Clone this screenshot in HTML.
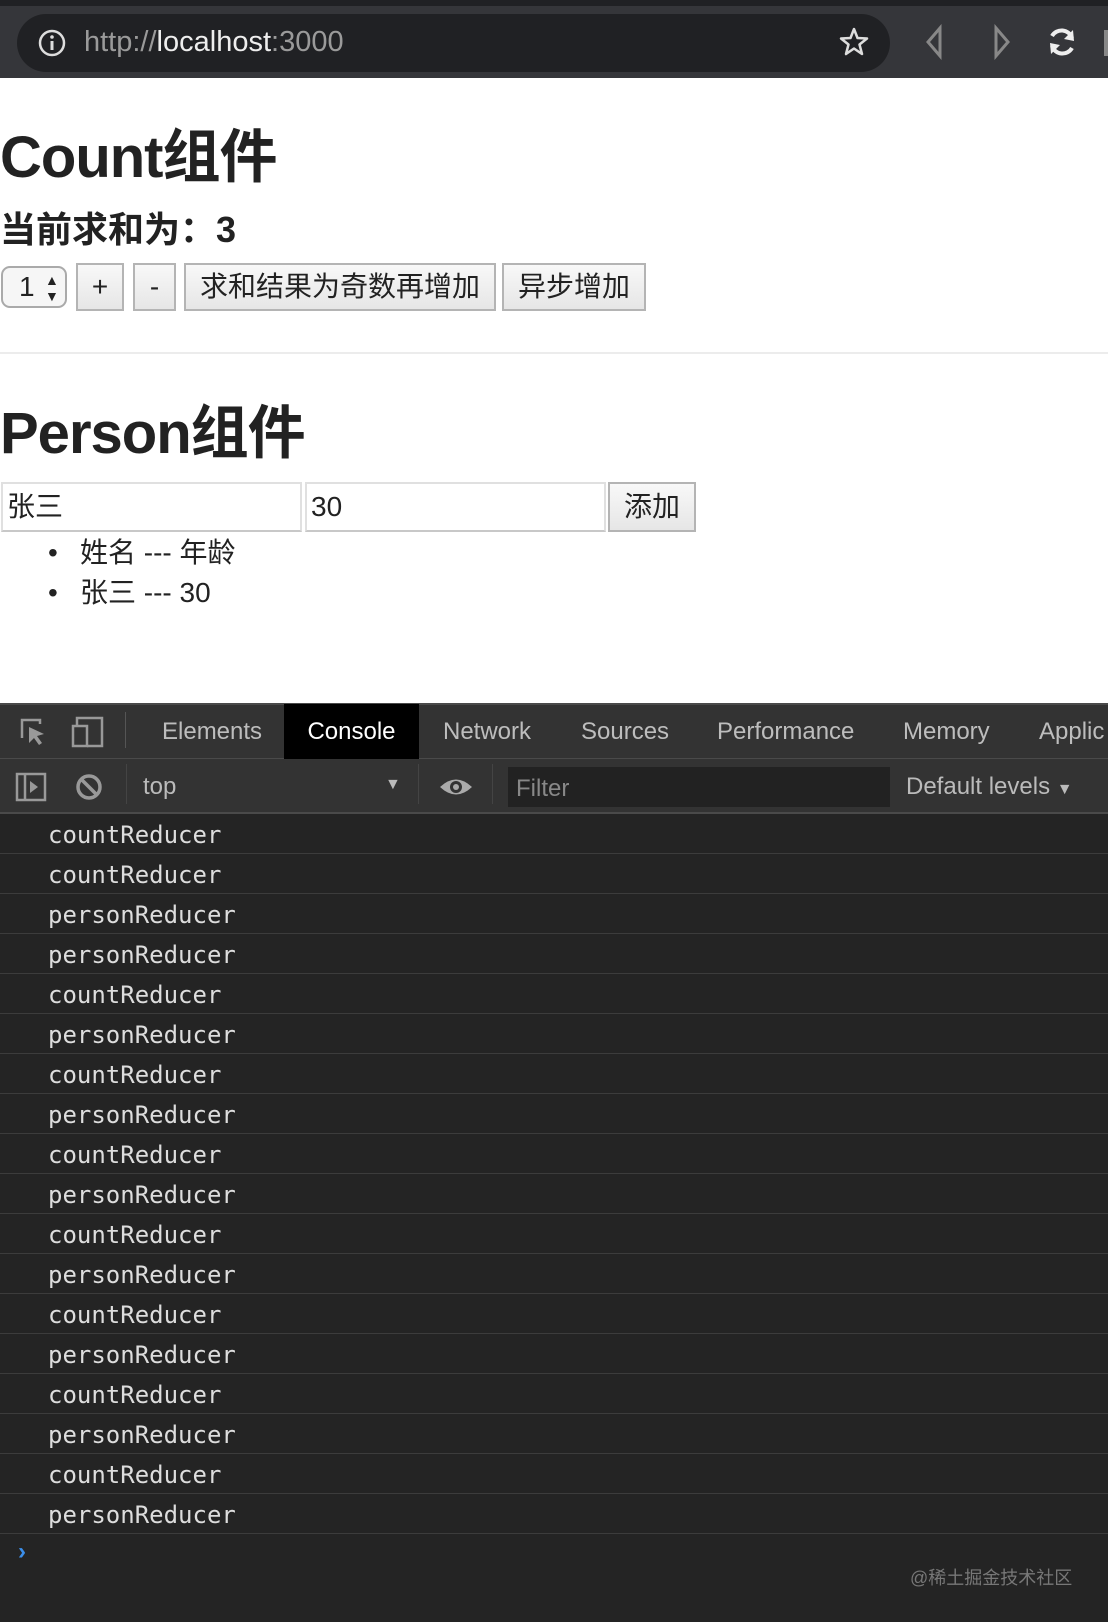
<!DOCTYPE html>
<html><head><meta charset="utf-8"><style>
*{margin:0;padding:0;box-sizing:border-box}
body{width:1108px;height:1622px;position:relative;background:#fff;font-family:"Liberation Sans","Noto Sans CJK SC",sans-serif;color:#222;overflow:hidden}
.a{position:absolute;white-space:nowrap}
.btn{position:absolute;border:2px solid #b4b4b4;background:linear-gradient(#f8f8f8,#e6e6e6);font-size:28px;color:#222;text-align:center;line-height:43px;height:48px}
.tab{position:absolute;top:704px;height:55px;line-height:55px;font-size:24px;color:#bdbdbd}
.row{position:absolute;left:0;width:1108px;height:40px;border-bottom:1px solid #3c3c3c;font-family:"DejaVu Sans Mono","Liberation Mono",monospace;font-size:24px;color:#ddd;line-height:42px;padding-left:48px}
</style></head><body>
<div class="a" style="left:0;top:0;width:1108px;height:78px;background:#35363a"></div>
<div class="a" style="left:0;top:0;width:1108px;height:6px;background:#202124"></div>
<div class="a" style="left:17px;top:14px;width:873px;height:58px;border-radius:29px;background:#202124"></div>
<svg class="a" style="left:37px;top:28px" width="30" height="30"><circle cx="15" cy="15" r="12" fill="none" stroke="#ddd" stroke-width="2.5"/><rect x="13.5" y="13" width="3" height="9" fill="#ddd"/><circle cx="15" cy="9" r="1.8" fill="#ddd"/></svg>
<div class="a" style="left:84px;top:26px;font-size:29px;color:#9a9a9a">http://<span style="color:#eee">localhost</span>:3000</div>
<svg class="a" style="left:838px;top:26px" width="32" height="32"><path d="M16 3 L19.5 12 L29 12.5 L21.5 18.5 L24 28 L16 22.5 L8 28 L10.5 18.5 L3 12.5 L12.5 12Z" fill="none" stroke="#ddd" stroke-width="2.5" stroke-linejoin="round"/></svg>
<svg class="a" style="left:920px;top:24px" width="160" height="36"><path d="M20 4 L8 18 L20 32 Z" fill="none" stroke="#888" stroke-width="3"/><path d="M76 4 L88 18 L76 32 Z" fill="none" stroke="#888" stroke-width="3"/><path d="M132 12 A11 11 0 0 1 152 14" fill="none" stroke="#eee" stroke-width="4"/><path d="M153 6 L154 17 L144 15Z" fill="#eee"/><path d="M152 24 A11 11 0 0 1 132 22" fill="none" stroke="#eee" stroke-width="4"/><path d="M131 30 L130 19 L140 21Z" fill="#eee"/></svg>
<div class="a" style="left:1104px;top:30px;width:4px;height:26px;background:#888"></div>

<div class="a" style="left:0;top:110px;font-size:58px;font-weight:bold;color:#222;letter-spacing:-1px">Count组件</div>
<div class="a" style="left:0;top:201px;font-size:36px;font-weight:bold;color:#222">当前求和为：3</div>
<div class="a" style="left:1px;top:266px;width:66px;height:42px;border:2px solid #aaa;border-radius:9px;background:#f6f6f6;font-size:28px;line-height:38px;padding-left:16px">1<span style="position:absolute;left:42px;top:4px;font-size:14px;line-height:16px">▲<br>▼</span></div>
<div class="btn" style="left:76px;top:263px;width:48px">+</div>
<div class="btn" style="left:133px;top:263px;width:43px">-</div>
<div class="btn" style="left:184px;top:263px;width:312px">求和结果为奇数再增加</div>
<div class="btn" style="left:502px;top:263px;width:144px">异步增加</div>
<div class="a" style="left:0;top:352px;width:1108px;height:2px;background:#ececec"></div>

<div class="a" style="left:0;top:386px;font-size:58px;font-weight:bold;color:#222;letter-spacing:-1px">Person组件</div>
<div class="a" style="left:1px;top:482px;width:301px;height:50px;border:2px solid #e0e0e0;border-bottom-color:#c8c8c8;font-size:28px;line-height:46px;padding-left:4px">张三</div>
<div class="a" style="left:305px;top:482px;width:301px;height:50px;border:2px solid #e0e0e0;border-bottom-color:#c8c8c8;font-size:28px;line-height:46px;padding-left:4px">30</div>
<div class="btn" style="left:608px;top:482px;width:88px;height:50px;line-height:46px">添加</div>
<div class="a" style="left:48px;top:533px;font-size:28px;line-height:40px">•<br>•</div>
<div class="a" style="left:80px;top:533px;font-size:28px;line-height:40px">姓名 --- 年龄<br>张三 --- 30</div>

<div class="a" style="left:0;top:703px;width:1108px;height:919px;background:#242424"></div>
<div class="a" style="left:0;top:703px;width:1108px;height:56px;background:#333;border-top:2px solid #4a4a4a;border-bottom:1px solid #4a4a4a"></div>
<svg class="a" style="left:18px;top:716px" width="90" height="32"><path d="M4 22 V4 H22 V8" fill="none" stroke="#999" stroke-width="2.5"/><path d="M11 11 L26 18 L19 20 L24 27 L21 29 L16 22 L11 27Z" fill="#999"/><rect x="55" y="10" width="14" height="20" fill="none" stroke="#999" stroke-width="2.5"/><path d="M59 10 V2 H84 V30 H69" fill="none" stroke="#999" stroke-width="2.5"/></svg>
<div class="a" style="left:125px;top:712px;width:1px;height:36px;background:#555"></div>
<div class="tab" style="left:162px">Elements</div>
<div class="tab" style="left:284px;width:135px;background:#000;color:#fff;text-align:center">Console</div>
<div class="tab" style="left:443px">Network</div>
<div class="tab" style="left:581px">Sources</div>
<div class="tab" style="left:717px">Performance</div>
<div class="tab" style="left:903px">Memory</div>
<div class="tab" style="left:1039px">Applic</div>

<div class="a" style="left:0;top:759px;width:1108px;height:55px;background:#333;border-bottom:2px solid #4a4a4a"></div>
<svg class="a" style="left:15px;top:772px" width="100" height="30"><rect x="2" y="2" width="28" height="26" fill="none" stroke="#999" stroke-width="2.5"/><line x1="10" y1="2" x2="10" y2="28" stroke="#999" stroke-width="2.5"/><path d="M15 9 L23 15 L15 21Z" fill="#999"/><circle cx="74" cy="15" r="11" fill="none" stroke="#999" stroke-width="3.5"/><line x1="66" y1="7" x2="82" y2="23" stroke="#999" stroke-width="3.5"/></svg>
<div class="a" style="left:126px;top:764px;width:1px;height:40px;background:#444"></div>
<div class="a" style="left:143px;top:773px;font-size:24px;color:#bbb">top</div>
<div class="a" style="left:385px;top:776px;font-size:16px;color:#bbb">▼</div>
<div class="a" style="left:418px;top:764px;width:1px;height:40px;background:#444"></div>
<svg class="a" style="left:438px;top:772px" width="36" height="30"><path d="M2 15 Q18 0 34 15 Q18 30 2 15Z" fill="#aaa"/><circle cx="18" cy="15" r="6" fill="#333"/><circle cx="18" cy="15" r="3" fill="#aaa"/></svg>
<div class="a" style="left:492px;top:764px;width:1px;height:40px;background:#444"></div>
<div class="a" style="left:508px;top:767px;width:382px;height:40px;background:#222"></div>
<div class="a" style="left:516px;top:775px;font-size:24px;color:#888">Filter</div>
<div class="a" style="left:906px;top:773px;font-size:24px;color:#bbb">Default levels <span style="font-size:16px">▼</span></div>

<div class="row" style="top:814px">countReducer</div>
<div class="row" style="top:854px">countReducer</div>
<div class="row" style="top:894px">personReducer</div>
<div class="row" style="top:934px">personReducer</div>
<div class="row" style="top:974px">countReducer</div>
<div class="row" style="top:1014px">personReducer</div>
<div class="row" style="top:1054px">countReducer</div>
<div class="row" style="top:1094px">personReducer</div>
<div class="row" style="top:1134px">countReducer</div>
<div class="row" style="top:1174px">personReducer</div>
<div class="row" style="top:1214px">countReducer</div>
<div class="row" style="top:1254px">personReducer</div>
<div class="row" style="top:1294px">countReducer</div>
<div class="row" style="top:1334px">personReducer</div>
<div class="row" style="top:1374px">countReducer</div>
<div class="row" style="top:1414px">personReducer</div>
<div class="row" style="top:1454px">countReducer</div>
<div class="row" style="top:1494px">personReducer</div>
<div class="a" style="left:18px;top:1538px;font-size:24px;color:#3b8eea;font-weight:bold">›</div>
<div class="a" style="left:910px;top:1564px;font-size:18px;color:#777">@稀土掘金技术社区</div>
</body></html>
